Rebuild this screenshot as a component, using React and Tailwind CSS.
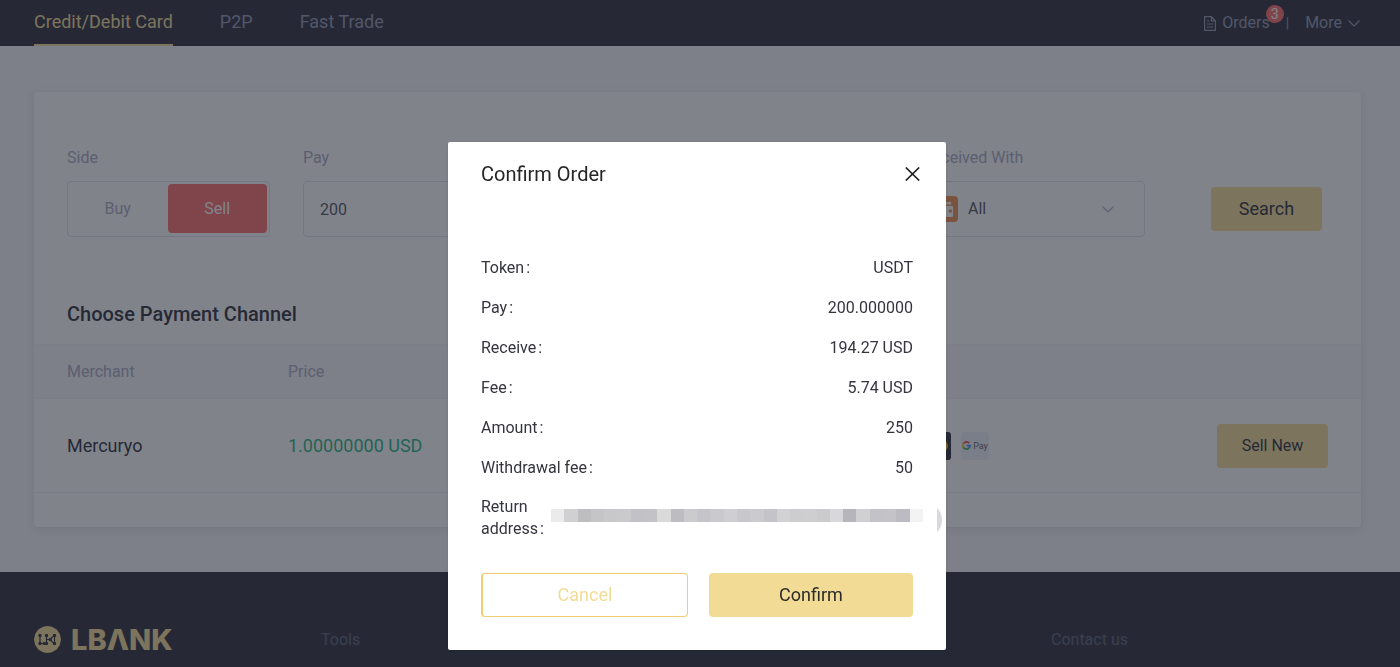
import { useState } from 'react';

const navTabs = [
  { label: 'Credit/Debit Card', active: true },
  { label: 'P2P', active: false },
  { label: 'Fast Trade', active: false },
];

const orderRows = [
  { label: 'Token', value: 'USDT' },
  { label: 'Pay', value: '200.000000' },
  { label: 'Receive', value: '194.27 USD' },
  { label: 'Fee', value: '5.74 USD' },
  { label: 'Amount', value: '250' },
  { label: 'Withdrawal fee', value: '50' },
];

// Shades of the masked address, left to right
const maskShades = [
  '#ebebec', '#d0d0d2', '#bebdc0', '#c5c4c7', '#c8c8ca', '#cacacc', '#c2c1c5', '#c3c2c6', '#dadadb',
  '#bdbcc0', '#cbcbcd', '#c5c5c9', '#cacace', '#cfcfd1', '#c8c8cc', '#cbcbce', '#c4c3c7', '#d2d2d4',
  '#cdcdd0', '#cecdd0', '#cbcacd', '#d8d8da', '#b6b5ba', '#d0d0d2', '#c3c2c7', '#c4c3c7', '#bcbbc2', '#f3f3f4',
];

function ChevronDown({ className }) {
  return (
    <svg viewBox="0 0 12 7" fill="none" stroke="currentColor" strokeWidth="1.2" className={className}>
      <path d="M0.5 0.5 6 6 11.5 0.5" />
    </svg>
  );
}

function OrdersIcon() {
  return (
    <svg width="12" height="15" viewBox="0 0 12 15" fill="none" stroke="currentColor" strokeWidth="1.2">
      <path d="M0.6 0.6H7.4L11.4 4.8V14.4H0.6ZM7.4 0.6V4.8H11.4M2.8 5H5M2.8 8H9.2M2.8 11H9.2" />
    </svg>
  );
}

function WalletIcon() {
  return (
    <svg width="26" height="26" viewBox="0 0 26 26" className="shrink-0">
      <rect width="26" height="26" rx="4" fill="#ee8e4a" />
      <path d="M5 8.5 18.5 5.5 19.5 8.5Z" fill="#fff" />
      <rect x="5" y="10" width="16" height="11" rx="1" fill="#fff" />
      <circle cx="18.4" cy="15" r="1.8" fill="#ee8e4a" />
    </svg>
  );
}

function CardIcon() {
  return (
    <svg width="28" height="28" viewBox="0 0 28 28">
      <rect width="28" height="28" rx="3" fill="#262a36" />
      <circle cx="10" cy="14" r="6" fill="#ea3f3f" />
      <circle cx="19" cy="14" r="6" fill="#f5a623" />
    </svg>
  );
}

function GooglePayIcon() {
  return (
    <span className="flex h-7 w-7 items-center justify-center gap-0.5 rounded bg-[#eff2fa]">
      <svg width="9" height="9" viewBox="0 0 18 18" fill="none" strokeWidth="3.4">
        <path d="M14.5 4.2A7.2 7.2 0 0 0 2.8 5.4" stroke="#ea4335" />
        <path d="M2.8 5.4A7.2 7.2 0 0 0 2.8 12.6" stroke="#fbbc04" />
        <path d="M2.8 12.6A7.2 7.2 0 0 0 13.6 14.5" stroke="#34a853" />
        <path d="M13.6 14.5A7.2 7.2 0 0 0 16.2 9.2H9.2" stroke="#4285f4" />
      </svg>
      <span className="text-[9px] leading-3 text-[#5f6368]">Pay</span>
    </span>
  );
}

function LogoMark() {
  return (
    <svg width="27" height="27" viewBox="0 0 27 27">
      <path
        d="M13.5 0 18 .8 22.7 3.6 25.8 8 27 13.5 25.8 19 22.7 23.4 18 26.2 13.5 27 9 26.2 4.3 23.4 1.2 19 0 13.5 1.2 8 4.3 3.6 9 .8Z"
        fill="#f2dc95"
      />
      <g fill="#262a36" stroke="#262a36" strokeWidth="1.2">
        <path d="M6 9.5V17.5H10.5M12.5 9.5V17.5M12.5 13.5H15.5M20.5 9.5V17.5M20.5 9.5 17.2 12V15L20.5 17.5" fill="none" />
        <circle cx="6" cy="9.5" r="1.1" />
        <circle cx="6" cy="17.5" r="1.1" />
        <circle cx="10" cy="17.5" r="0.9" />
        <circle cx="12.5" cy="9.5" r="1.1" />
        <circle cx="12.5" cy="17.5" r="1.1" />
        <circle cx="16" cy="13.5" r="0.9" />
        <circle cx="20.5" cy="9.5" r="1.1" />
        <circle cx="20.5" cy="17.5" r="1.1" />
      </g>
    </svg>
  );
}

function Header() {
  return (
    <header className="flex h-[46px] items-stretch justify-between bg-[#262a36] pl-[34px] pr-10 text-[#8f95b2]">
      <nav className="flex gap-[47px] text-lg">
        {navTabs.map((tab) => (
          <a
            key={tab.label}
            href="#"
            className={`flex items-center border-b-2 ${
              tab.active ? 'border-[#f2dc95] text-[#f2dc95]' : 'border-transparent'
            }`}
          >
            {tab.label}
          </a>
        ))}
      </nav>
      <div className="flex items-center text-base">
        <a href="#" className="relative flex items-center gap-1.5">
          <OrdersIcon />
          Orders
          <span className="absolute -right-3.5 -top-1.5 flex h-[18px] w-[18px] items-center justify-center rounded-full bg-[#f96c69] text-sm text-white">
            3
          </span>
        </a>
        <span className="ml-4 text-sm">|</span>
        <button type="button" className="ml-4 flex items-center gap-1.5">
          More
          <ChevronDown className="h-[7px] w-3" />
        </button>
      </div>
    </header>
  );
}

function TradeForm({ side, setSide }) {
  return (
    <form className="flex items-end px-[33px] pt-14" onSubmit={(e) => e.preventDefault()}>
      <fieldset className="w-[203px]">
        <legend className="mb-[13px] text-base leading-5 text-[#a5a9c4]">Side</legend>
        <div className="flex h-14 rounded border border-[#dfe2ea] p-0.5 pb-[3px] pl-0 text-base">
          <button
            type="button"
            onClick={() => setSide('buy')}
            className={`flex-1 rounded ${side === 'buy' ? 'bg-[#25a77b] text-white' : 'text-[#a5a9c4]'}`}
          >
            Buy
          </button>
          <button
            type="button"
            onClick={() => setSide('sell')}
            className={`flex-1 rounded ${side === 'sell' ? 'bg-[#f96c69] text-white' : 'text-[#a5a9c4]'}`}
          >
            Sell
          </button>
        </div>
      </fieldset>
      <div className="ml-[33px] flex-1">
        <label htmlFor="pay" className="mb-[13px] block text-base leading-5 text-[#a5a9c4]">
          Pay
        </label>
        <input
          id="pay"
          defaultValue="200"
          className="h-14 w-full rounded border border-[#dfe2ea] px-4 text-base text-[#4a4f5e]"
        />
      </div>
      <div className="ml-[33px] w-[222px]">
        <p id="received" className="mb-[13px] text-base leading-5 text-[#a5a9c4]">
          Received With
        </p>
        <button
          type="button"
          aria-labelledby="received"
          className="flex h-14 w-full items-center gap-2.5 rounded border border-[#dfe2ea] pl-2 pr-[30px] text-base text-[#4a4f5e]"
        >
          <WalletIcon />
          All
          <ChevronDown className="ml-auto h-[7px] w-3 text-[#a5a9c4]" />
        </button>
      </div>
      <button
        type="submit"
        className="mb-1.5 ml-[66px] mr-1.5 h-11 w-[111px] rounded bg-[#f2dc95] text-lg text-[#262a36]"
      >
        Search
      </button>
    </form>
  );
}

function ChannelTable() {
  return (
    <table className="mt-4 w-full text-left">
      <thead className="border-y border-[#f0f2f5] bg-[#f5f7f9] text-base text-[#a5a9c4]">
        <tr className="h-[54px]">
          <th className="w-[254px] pl-[33px] font-normal">Merchant</th>
          <th className="font-normal">Price</th>
          <th aria-label="Payment methods" />
          <th aria-label="Action" />
        </tr>
      </thead>
      <tbody>
        <tr className="h-[94px] border-b border-[#eff1f4] text-lg text-[#262a36]">
          <td className="pl-[33px]">Mercuryo</td>
          <td className="text-[#20b480]">1.00000000 USD</td>
          <td className="w-[294px]">
            <span className="flex gap-2.5">
              <CardIcon />
              <GooglePayIcon />
            </span>
          </td>
          <td className="w-36">
            <button type="button" className="h-11 w-[111px] rounded bg-[#f2dc95] text-base">
              Sell New
            </button>
          </td>
        </tr>
      </tbody>
    </table>
  );
}

function Footer() {
  return (
    <footer className="flex h-[95px] items-center bg-[#262a36] pl-[34px] pt-10 text-base text-[#565f78]">
      <div className="flex w-[287px] items-center gap-2.5" aria-label="LBANK">
        <LogoMark />
        <span className="font-[Inter,sans-serif] text-[29px] font-extrabold leading-7 text-[#f2dc95]">LBΛNK</span>
      </div>
      <a href="#" className="w-[730px]">
        Tools
      </a>
      <a href="#">Contact us</a>
    </footer>
  );
}

function ConfirmOrder({ onClose }) {
  return (
    <div className="fixed inset-0 flex items-start justify-center overflow-y-auto bg-[#262a36]/58 pr-1.5 pt-[142px]">
      <div
        role="dialog"
        aria-labelledby="confirm-title"
        className="relative w-[498px] rounded-xs bg-white px-[33px] pb-[33px] pt-5 text-base text-[#34353d] shadow-sm"
      >
        <div className="-mr-2 flex items-center justify-between">
          <h2 id="confirm-title" className="text-xl leading-6 text-[#262626]">
            Confirm Order
          </h2>
          <button type="button" aria-label="Close" onClick={onClose} className="flex h-4 w-4 items-center">
            <svg width="15" height="14" viewBox="0 0 15 14" fill="none" stroke="#222" strokeWidth="1.7">
              <path d="M0.8 0.5 14.2 13.5M14.2 0.5 0.8 13.5" />
            </svg>
          </button>
        </div>

        <dl className="mt-[70px] flex flex-col gap-4">
          {orderRows.map((row) => (
            <div key={row.label} className="flex justify-between leading-6">
              <dt>
                {row.label}
                <span className="ml-0.5">:</span>
              </dt>
              <dd>{row.value}</dd>
            </div>
          ))}
          <div className="-mr-2.5 flex items-start leading-[22px]">
            <dt className="w-[70px]">
              Return address<span className="ml-0.5">:</span>
            </dt>
            <dd className="flex flex-1 pt-[13px]" aria-label="Hidden address">
              {maskShades.map((shade, i) => (
                <span key={i} className="h-[13px] flex-1" style={{ backgroundColor: shade }} />
              ))}
            </dd>
          </div>
        </dl>

        <div className="mt-[33px] flex gap-[21px] text-lg">
          <button
            type="button"
            onClick={onClose}
            className="h-11 flex-1 rounded border border-l-2 border-[#efcf72] text-[#f2dc95]"
          >
            Cancel
          </button>
          <button type="button" className="h-11 flex-1 rounded bg-[#f2dc95] text-[#2b2b2b]">
            Confirm
          </button>
        </div>

        <svg width="5" height="24" viewBox="0 0 5 24" className="absolute bottom-[118px] right-1">
          <path d="M0 0C6.6 6 6.6 18 0 24Z" fill="#d8d9dc" />
        </svg>
      </div>
    </div>
  );
}

export default function App() {
  const [side, setSide] = useState('sell');
  const [confirmOpen, setConfirmOpen] = useState(true);

  return (
    <div className="min-h-screen bg-[#f5f7f9] font-[Roboto,sans-serif]">
      <Header />
      <main className="pb-[45px] pl-[34px] pr-[39px] pt-[46px]">
        <section className="rounded bg-white pb-[34px] shadow-[0_2px_8px_rgba(38,42,54,0.1)]">
          <TradeForm side={side} setSide={setSide} />
          <h1 className="mt-[63px] px-[33px] text-xl font-medium leading-7 text-[#262a36]">Choose Payment Channel</h1>
          <ChannelTable />
        </section>
      </main>
      <Footer />
      {confirmOpen && <ConfirmOrder onClose={() => setConfirmOpen(false)} />}
    </div>
  );
}
